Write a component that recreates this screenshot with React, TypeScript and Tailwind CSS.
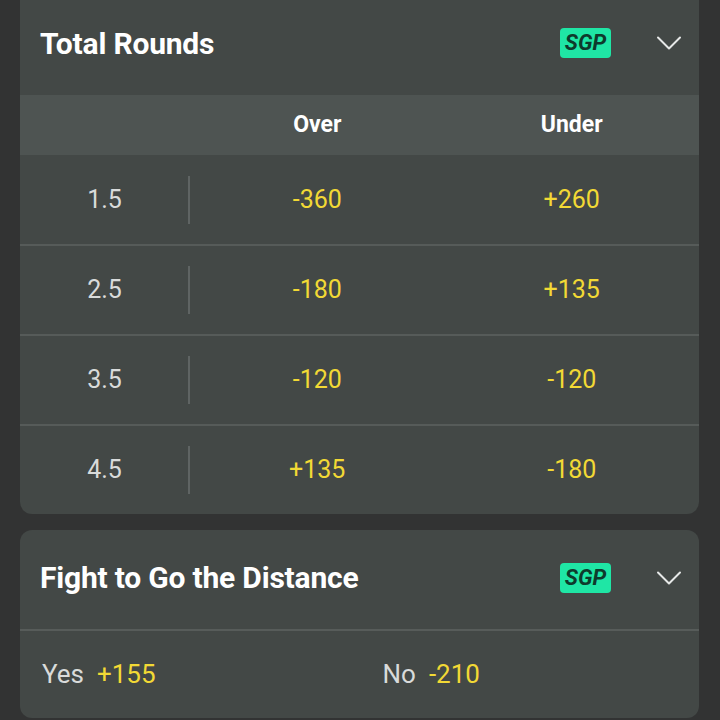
import React from "react";

const rows = [
  { line: "1.5", over: "-360", under: "+260" },
  { line: "2.5", over: "-180", under: "+135" },
  { line: "3.5", over: "-120", under: "-120" },
  { line: "4.5", over: "+135", under: "-180" },
];

function Chevron() {
  return (
    <svg width="26" height="16" viewBox="0 0 26 16" fill="none">
      <path d="M2 2.5 L13 13.5 L24 2.5" stroke="#e6e8e7" strokeWidth="2" strokeLinecap="round" strokeLinejoin="round" />
    </svg>
  );
}

function Badge() {
  return (
    <div className="flex h-[30px] w-[51px] items-center justify-center rounded-[4px] bg-[#1fe6a5]">
      <span className="text-[22px] font-bold italic leading-none text-[#0e3a2c]">SGP</span>
    </div>
  );
}

export default function App() {
  return (
    <div
      className="flex h-[720px] w-[720px] flex-col gap-[16px] overflow-hidden bg-[#323333] pl-[20px] pr-[21px]"
      style={{ fontFamily: "Roboto, 'Liberation Sans', sans-serif" }}
    >
      <div className="flex shrink-0 flex-col overflow-hidden rounded-b-[12px] bg-[#434846]">
        <div className="flex h-[95px] items-center pb-[9px] pl-[20px] pr-[17px]">
          <div className="flex-1 text-[30px] font-bold tracking-[-0.2px] text-white">Total Rounds</div>
          <Badge />
          <div className="ml-[45px] flex items-center">
            <Chevron />
          </div>
        </div>
        <div className="flex h-[60px] items-center bg-[#4e5452] text-[23px] font-bold text-white">
          <div className="w-[170px]" />
          <div className="flex-1 text-center">Over</div>
          <div className="flex-1 text-center">Under</div>
        </div>
        {rows.map((r, i) => (
          <div
            key={r.line}
            className={`flex items-center ${i > 0 ? "h-[90px] border-t-2 border-[#565b59]" : "h-[89px]"}`}
          >
            <div className="w-[168px] pl-[1px] text-center text-[25px] text-[#d9dbda]">{r.line}</div>
            <div className="h-[48px] w-[2px] bg-[#5f6463]" />
            <div className="flex-1 text-center text-[25px] text-[#f2d935]">{r.over}</div>
            <div className="flex-1 text-center text-[25px] text-[#f2d935]">{r.under}</div>
          </div>
        ))}
      </div>
      <div className="flex shrink-0 flex-col overflow-hidden rounded-[12px] bg-[#434846]">
        <div className="flex h-[99px] items-center pb-[4px] pl-[20px] pr-[17px]">
          <div className="flex-1 text-[30px] font-bold tracking-[-0.2px] text-white">Fight to Go the Distance</div>
          <Badge />
          <div className="ml-[45px] flex items-center">
            <Chevron />
          </div>
        </div>
        <div className="h-[2px] bg-[#575c5a]" />
        <div className="flex h-[87px] items-center text-[26px]">
          <div className="flex flex-1 items-center gap-[13px] pl-[22px]">
            <span className="text-[#d9dbda]">Yes</span>
            <span className="text-[#f2d935]">+155</span>
          </div>
          <div className="flex flex-1 items-center gap-[13px] pl-[24px]">
            <span className="text-[#d9dbda]">No</span>
            <span className="text-[#f2d935]">-210</span>
          </div>
        </div>
      </div>
    </div>
  );
}
